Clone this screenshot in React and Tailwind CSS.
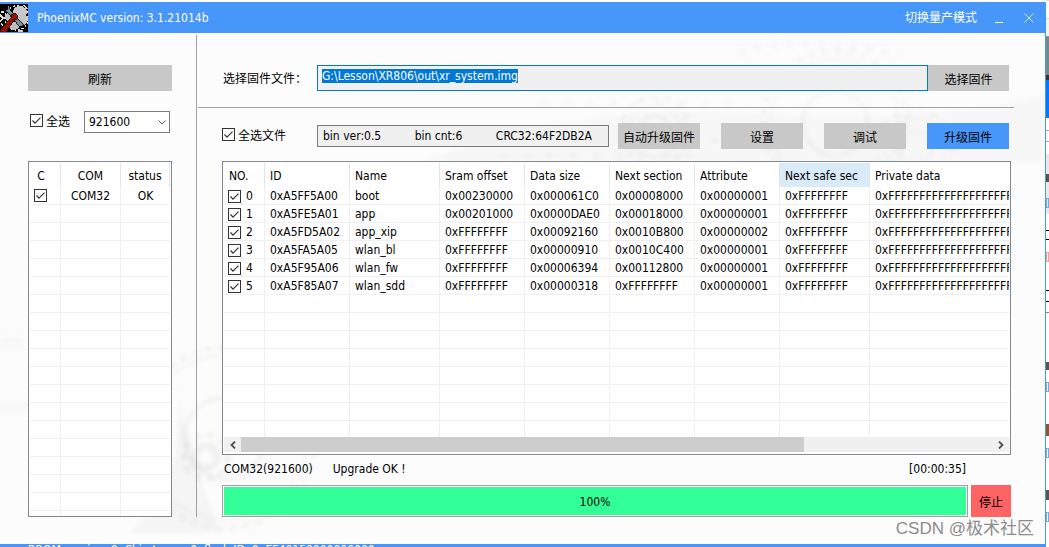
import { useEffect, useRef } from "react";

const files = [
  ["0xA5FF5A00", "boot", "0x00230000", "0x000061C0", "0x00008000", "0x00000001"],
  ["0xA5FE5A01", "app", "0x00201000", "0x0000DAE0", "0x00018000", "0x00000001"],
  ["0xA5FD5A02", "app_xip", "0xFFFFFFFF", "0x00092160", "0x0010B800", "0x00000002"],
  ["0xA5FA5A05", "wlan_bl", "0xFFFFFFFF", "0x00000910", "0x0010C400", "0x00000001"],
  ["0xA5F95A06", "wlan_fw", "0xFFFFFFFF", "0x00006394", "0x00112800", "0x00000001"],
  ["0xA5F85A07", "wlan_sdd", "0xFFFFFFFF", "0x00000318", "0xFFFFFFFF", "0x00000001"],
];

const fileColumns = [
  { label: "NO.", width: "w-[41px]" },
  { label: "ID", width: "w-[85px]" },
  { label: "Name", width: "w-[90px]" },
  { label: "Sram offset", width: "w-[85px]" },
  { label: "Data size", width: "w-[85px]" },
  { label: "Next section", width: "w-[85px]" },
  { label: "Attribute", width: "w-[85px]" },
  { label: "Next safe sec", width: "w-[90px]", active: true },
  { label: "Private data", width: "w-[340px]" },
];

const actions = ["自动升级固件", "设置", "调试"];

function Checkbox({ id, label }) {
  return (
    <span className="grid size-[13px] shrink-0">
      <input
        id={id}
        type="checkbox"
        aria-label={label}
        defaultChecked
        className="peer col-start-1 row-start-1 size-[13px] appearance-none border border-[#333] bg-white"
      />
      <svg
        viewBox="0 0 13 13"
        className="pointer-events-none invisible col-start-1 row-start-1 size-[13px] peer-checked:visible"
      >
        <path d="M2.5 6.5 L5 9.2 L10.5 3.6" fill="none" stroke="#333" strokeWidth="1.2" />
      </svg>
    </span>
  );
}

function Button({ children, className = "bg-[#c8c8c8]" }) {
  return (
    <button type="button" className={`h-[26px] pt-1 text-center ${className}`}>
      {children}
    </button>
  );
}

function Logo() {
  return (
    <svg viewBox="0 0 28 28" className="size-7 shrink-0" shapeRendering="crispEdges">
      <rect width="28" height="28" fill="#000" />
      <circle cx="17" cy="14" r="12" fill="none" stroke="#ddd" strokeWidth="1.5" strokeDasharray="2 2" />
      <ellipse cx="20" cy="8" rx="7" ry="6" fill="#c9c9c9" />
      <ellipse cx="22" cy="16" rx="5" ry="6" fill="#c4c4c4" />
      <ellipse cx="9" cy="13" rx="4" ry="4" fill="#bdbdbd" />
      <ellipse cx="14" cy="22" rx="5" ry="4" fill="#bdbdbd" />
      <path d="M3 4 L8 9 L20 23 L24 21 L11 7 L9 2 L7 1 L8 5 L5 6 L2 3 Z" fill="#7d8fa0" stroke="#000" strokeWidth="0.8" />
      <path d="M0 26 L11 14 L11 11 L15 9 L18 12 L17 15 L14 16 L6 28 L1 28 Z" fill="#8c150c" stroke="#2a0000" strokeWidth="0.8" />
      <path d="M0 11 l3 3 l-3 4 M1 20 l2 1 M1 8 h3" stroke="#ddd" strokeWidth="1.5" fill="none" />
      <path d="M24 1 l3 4 M27 12 v5 M18 27 h5" stroke="#ccc" strokeWidth="1.5" />
    </svg>
  );
}

function Gear({ x, y, r, opacity }) {
  return (
    <g transform={`translate(${x} ${y})`} fill="none" stroke="#8a8a8a" opacity={opacity}>
      <circle r={r} strokeWidth="5" strokeDasharray="7 6" />
      <circle r={r - 8} strokeWidth="2" />
      <circle r={r * 0.45} strokeWidth="4" />
    </g>
  );
}

function Backdrop() {
  return (
    <svg
      viewBox="0 0 1045 511"
      preserveAspectRatio="none"
      className="pointer-events-none absolute inset-0 size-full blur-[2px]"
    >
      <path d="M420 130 Q560 70 760 80 T1045 60 V130 Z" fill="#777" opacity="0.04" />
      <path d="M175 350 Q190 420 220 500 L130 500 Q190 440 175 350 Z" fill="#777" opacity="0.05" />
      <Gear x={835} y={90} r={72} opacity={0.07} />
      <Gear x={915} y={115} r={38} opacity={0.06} />
      <Gear x={655} y={98} r={34} opacity={0.08} />
      <Gear x={206} y={424} r={22} opacity={0.12} />
      <Gear x={225} y={405} r={90} opacity={0.09} />
      <path d="M540 70 H740 M480 108 H720 M500 122 H700" stroke="#888" strokeWidth="5" strokeDasharray="9 14" opacity="0.05" />
      <path d="M740 20 Q800 0 900 22" fill="none" stroke="#888" strokeWidth="9" strokeDasharray="6 10" opacity="0.05" />
      <path d="M0 375 H28 M0 310 H24" stroke="#888" strokeWidth="12" opacity="0.03" />
    </svg>
  );
}

function PortTable() {
  return (
    <table className="w-full table-fixed border-separate border-spacing-0 text-center">
      <thead>
        <tr className="h-6">
          <th className="w-[31px] border-r border-[#e5e5e5] pt-0.5 pr-2 font-normal">C</th>
          <th className="w-[60px] border-r border-[#e5e5e5] pt-0.5 font-normal">COM</th>
          <th className="border-r border-[#e5e5e5] pt-0.5 font-normal">status</th>
        </tr>
      </thead>
      <tbody>
        {Array.from({ length: 19 }, (_, i) => (
          <tr key={i} className="h-[18px]">
            <td className="border-r border-b border-[#f0f0f0] pl-1">
              {i === 0 && <Checkbox label="COM32" />}
            </td>
            <td className="border-r border-b border-[#f0f0f0] pt-px">{i === 0 && "COM32"}</td>
            <td className="border-b border-[#f0f0f0] pt-px">{i === 0 && "OK"}</td>
          </tr>
        ))}
      </tbody>
    </table>
  );
}

function FileTable() {
  return (
    <table className="w-[986px] table-fixed border-separate border-spacing-0 text-left whitespace-nowrap">
      <thead>
        <tr className="h-6">
          {fileColumns.map((col) => (
            <th
              key={col.label}
              className={`border-r border-[#e5e5e5] pt-0.5 pl-[5px] font-normal ${col.width} ${
                col.active ? "bg-[#d9ebf9]" : ""
              }`}
            >
              {col.label}
            </th>
          ))}
        </tr>
      </thead>
      <tbody>
        {Array.from({ length: 14 }, (_, i) => {
          const file = files[i];
          const cells = file
            ? [...file, "0xFFFFFFFF", "0xFFFFFFFFFFFFFFFFFFFFFFFFFFFFFFFF"]
            : Array(8).fill("");

          return (
            <tr key={i} className="h-[18px]">
              <td className="border-r border-b border-[#f0f0f0] pt-px pl-1">
                {file && (
                  <label className="flex items-center gap-[5px]">
                    <Checkbox />
                    {i}
                  </label>
                )}
              </td>
              {cells.map((cell, n) => (
                <td key={n} className="overflow-hidden border-r border-b border-[#f0f0f0] pt-px pl-[5px]">
                  {cell}
                </td>
              ))}
            </tr>
          );
        })}
      </tbody>
    </table>
  );
}

function ScrollBar() {
  return (
    <div className="flex h-[15px] bg-[#f0f0f0]">
      <button type="button" aria-label="Scroll left" className="flex w-[17px] items-center justify-center">
        <svg viewBox="0 0 6 8" className="h-2 w-1.5">
          <path d="M5 0.5 L1.5 4 L5 7.5" fill="none" stroke="#505050" strokeWidth="1.8" />
        </svg>
      </button>
      <div className="flex grow">
        <div className="w-3/4 bg-[#cdcdcd]" />
      </div>
      <button type="button" aria-label="Scroll right" className="flex w-[17px] items-center justify-center">
        <svg viewBox="0 0 6 8" className="h-2 w-1.5">
          <path d="M1 0.5 L4.5 4 L1 7.5" fill="none" stroke="#505050" strokeWidth="1.8" />
        </svg>
      </button>
    </div>
  );
}

// Edge of the page that lies behind the window
function PageEdge() {
  return (
    <div className="flex w-[3px] shrink-0 flex-col bg-white">
      <div className="h-[19px] border-y border-[#ddd]" />
      <div className="h-[18px] border-b border-[#999] bg-[#f4f4f4]" />
      <div className="h-[38px] bg-[#728a8c]" />
      <div className="h-[5px] bg-[#333]" />
      <div className="h-[38px] bg-[#0078ff]" />
      <div className="mt-3 h-3 border-y border-[#aaa]" />
      <div className="mt-3 h-[60px] bg-[#e9e9eb] py-5">
        <div className="h-2 bg-[#555]" />
        <div className="mt-4 h-2.5 border border-[#7aa7d8]" />
      </div>
      <div className="mt-4 h-2.5 border-y border-black" />
      <div className="mt-3 h-2.5 border border-[#f5a0a0]" />
      <div className="mt-7 h-3 border-y border-black" />
      <div className="mt-2.5 h-2.5 border-t border-[#888]" />
      <div className="mt-10 h-2 bg-[#555]" />
      <div className="mt-3 h-2.5 border border-[#7aa7d8]" />
      <div className="mt-8 h-3 bg-[#8a5a2a]" />
      <div className="mt-3 h-2.5 border border-[#7aa7d8]" />
      <div className="mt-8 h-2.5 bg-[#555]" />
      <div className="mt-3 h-2.5 border border-[#7aa7d8]" />
    </div>
  );
}

function App() {
  const pathRef = useRef(null);

  useEffect(() => {
    pathRef.current.focus();
    pathRef.current.select();
  }, []);

  return (
    <div className="relative flex h-screen overflow-hidden bg-white font-['DejaVu_Sans_Condensed','Noto_Sans_CJK_SC',sans-serif] text-xs leading-4 text-black">
      <div className="flex min-w-0 grow flex-col pt-0.5">
        <header className="flex h-[31px] shrink-0 items-center bg-[#4796f9] text-white">
          <Logo />
          <h1 className="grow pt-px pl-[9px]">PhoenixMC version: 3.1.21014b</h1>
          <button type="button">切换量产模式</button>
          <button type="button" aria-label="Minimize" className="ml-[18px] flex h-[11px] w-2 items-end">
            <span className="h-px w-full bg-white" />
          </button>
          <button type="button" aria-label="Close" className="mr-3 ml-[21px]">
            <svg viewBox="0 0 10 10" className="size-2.5">
              <path d="M0.5 0.5 L9.5 9.5 M9.5 0.5 L0.5 9.5" stroke="#d5e6fd" strokeWidth="1" />
            </svg>
          </button>
        </header>

        <main className="relative flex shrink-0 border-r border-[#4796f9] bg-[#fcfcfc] pt-0.5 pb-[27px]">
          <Backdrop />

          <aside className="relative flex w-[197px] shrink-0 flex-col border-r border-[#a0a0a0] pt-[30px] pr-6 pl-7">
            <Button>刷新</Button>
            <div className="mt-5 mb-7 flex items-center pl-0.5">
              <label className="flex grow items-start gap-[3px]">
                <Checkbox />
                全选
              </label>
              <div className="relative mr-0.5">
                <select
                  aria-label="Baud rate"
                  className="block h-[22px] w-[86px] appearance-none border border-[#7a7a7a] bg-white pl-1"
                >
                  <option>921600</option>
                </select>
                <svg viewBox="0 0 8 5" className="pointer-events-none absolute top-[9px] right-1 h-[5px] w-2">
                  <path d="M0.5 0.5 L4 4 L7.5 0.5" fill="none" stroke="#555" strokeWidth="1" />
                </svg>
              </div>
            </div>
            <div className="h-0 grow overflow-hidden border border-[#828790] bg-white p-px">
              <PortTable />
            </div>
          </aside>

          <div className="relative flex min-w-0 grow flex-col">
            <div className="mr-[31px] ml-px flex border-b border-[#a0a0a0] pt-[30px] pr-[5px] pb-4 pl-[25px]">
              <label htmlFor="firmware" className="w-[94px] shrink-0 self-center pt-px">
                选择固件文件：
              </label>
              <input
                id="firmware"
                ref={pathRef}
                type="text"
                defaultValue="G:\Lesson\XR806\out\xr_system.img"
                className="h-[26px] min-w-0 grow border border-[#0078d7] bg-[#f0f0f0] px-1 pb-1 outline-none selection:bg-[#0078d7] selection:text-white"
              />
              <Button className="w-[81px] bg-[#c8c8c8]">选择固件</Button>
            </div>

            <div className="mt-[15px] mr-9 ml-[25px] flex items-center">
              <label className="flex w-[95px] shrink-0 items-start gap-[3px]">
                <Checkbox />
                全选文件
              </label>
              <div className="mr-[9px] flex h-[22px] grow items-center justify-between border border-[#7a7a7a] bg-[#f0f0f0] pr-4 pl-[5px]">
                <span>bin ver:0.5</span>
                <span>bin cnt:6</span>
                <span>CRC32:64F2DB2A</span>
              </div>
              <div className="flex gap-[21px]">
                {actions.map((action) => (
                  <Button key={action} className="w-[82px] bg-[#c8c8c8]">
                    {action}
                  </Button>
                ))}
                <Button className="w-[82px] bg-[#4796f9]">升级固件</Button>
              </div>
            </div>

            <section className="mt-3 mr-[34px] ml-[25px]">
              <div className="border border-[#828790] bg-white p-px pb-0.5">
                <div className="h-[274px] overflow-hidden">
                  <FileTable />
                </div>
                <ScrollBar />
              </div>

              <div className="mt-1.5 mb-2 flex gap-5 pr-[45px] pl-0.5">
                <span>COM32(921600)</span>
                <span className="grow">Upgrade OK !</span>
                <span>[00:00:35]</span>
              </div>

              <div className="flex gap-[3px]">
                <div
                  role="progressbar"
                  aria-valuenow={100}
                  className="h-8 grow border border-[#a0a0a0] bg-white p-px"
                >
                  <div className="flex h-full items-center justify-center bg-[#33ff99] pt-px">100%</div>
                </div>
                <button type="button" className="w-10 bg-[#ff6464] pt-1">
                  停止
                </button>
              </div>
            </section>
          </div>
        </main>

        <footer className="shrink-0 bg-[#4796f9] pl-7 leading-3 whitespace-pre text-white">
          BROM version: 0  Chip type:   0  flash ID: 0  EF40150000000000
        </footer>
      </div>

      <PageEdge />

      <div className="pointer-events-none absolute right-[15px] bottom-1 font-['Liberation_Sans','Noto_Sans_CJK_SC',sans-serif] text-[17px] leading-7 text-[#8c8c8c]">
        CSDN @极术社区
      </div>
    </div>
  );
}

export default App;
